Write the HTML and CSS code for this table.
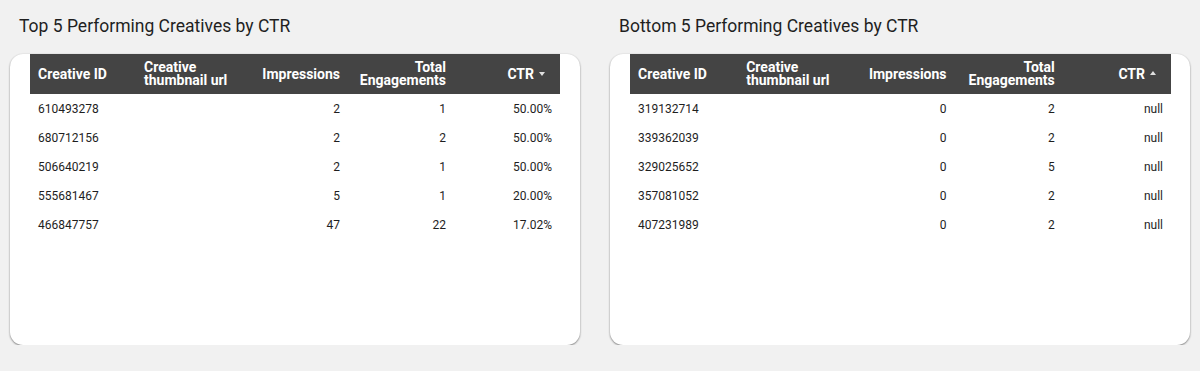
FILE: index.html
```html
<!DOCTYPE html>
<html>
<head>
<meta charset="utf-8">
<link rel="stylesheet" href="styles.css">
</head>
<body>
<div class="dashboard">
  <section class="panel panel-left">
    <h2 class="title">Top 5 Performing Creatives by CTR</h2>
    <div class="card">
      <table class="grid">
        <thead>
          <tr>
            <th class="l">Creative ID</th>
            <th class="l">Creative thumbnail url</th>
            <th class="r">Impressions</th>
            <th class="r">Total Engagements</th>
            <th class="r">CTR<span class="sort down"></span></th>
          </tr>
        </thead>
        <tbody>
          <tr><td>610493278</td><td></td><td class="r">2</td><td class="r">1</td><td class="r">50.00%</td></tr>
          <tr><td>680712156</td><td></td><td class="r">2</td><td class="r">2</td><td class="r">50.00%</td></tr>
          <tr><td>506640219</td><td></td><td class="r">2</td><td class="r">1</td><td class="r">50.00%</td></tr>
          <tr><td>555681467</td><td></td><td class="r">5</td><td class="r">1</td><td class="r">20.00%</td></tr>
          <tr><td>466847757</td><td></td><td class="r">47</td><td class="r">22</td><td class="r">17.02%</td></tr>
        </tbody>
      </table>
    </div>
  </section>
  <section class="panel panel-right">
    <h2 class="title">Bottom 5 Performing Creatives by CTR</h2>
    <div class="card">
      <table class="grid">
        <thead>
          <tr>
            <th class="l">Creative ID</th>
            <th class="l">Creative thumbnail url</th>
            <th class="r">Impressions</th>
            <th class="r">Total Engagements</th>
            <th class="r">CTR<span class="sort up"></span></th>
          </tr>
        </thead>
        <tbody>
          <tr><td>319132714</td><td></td><td class="r">0</td><td class="r">2</td><td class="r">null</td></tr>
          <tr><td>339362039</td><td></td><td class="r">0</td><td class="r">2</td><td class="r">null</td></tr>
          <tr><td>329025652</td><td></td><td class="r">0</td><td class="r">5</td><td class="r">null</td></tr>
          <tr><td>357081052</td><td></td><td class="r">0</td><td class="r">2</td><td class="r">null</td></tr>
          <tr><td>407231989</td><td></td><td class="r">0</td><td class="r">2</td><td class="r">null</td></tr>
        </tbody>
      </table>
    </div>
  </section>
</div>
</body>
</html>
```

FILE: styles.css
```css
html, body {
  margin: 0;
  padding: 0;
  background: #f1f1f1;
  font-family: Roboto, "Liberation Sans", Arial, sans-serif;
  color: #202020;
}

.dashboard {
  display: grid;
  grid-template-columns: 570px 580px;
  column-gap: 30px;
  padding: 0 10px;
}

.panel {
  display: flex;
  flex-direction: column;
}

.title {
  margin: 0;
  height: 54px;
  box-sizing: border-box;
  padding: 14px 9px 0;
  font-size: 17.5px;
  line-height: 24px;
  font-weight: 400;
  color: #1f1f1f;
}

.card {
  height: 291px;
  background: #fff;
  border-radius: 13px;
  box-shadow: 0 1px 2px rgba(0, 0, 0, 0.45), 0 0 2px rgba(0, 0, 0, 0.08);
  padding: 0 20px;
  box-sizing: border-box;
}

.panel-right .card {
  padding: 0 19px 0 20px;
}

.grid {
  width: 100%;
  table-layout: fixed;
  border-collapse: collapse;
  font-size: 12px;
}

.grid th {
  background: #444444;
  color: #fff;
  font-weight: 700;
  font-size: 14px;
  line-height: 13px;
  height: 40px;
  padding: 0 8px;
  vertical-align: middle;
  box-sizing: border-box;
}

.grid td {
  height: 29px;
  box-sizing: border-box;
  padding: 1px 8px 0;
  line-height: 14px;
  vertical-align: middle;
  color: #1e1e1e;
}

.l { text-align: left; }
.r { text-align: right; }

.sort {
  display: inline-block;
  width: 0;
  height: 0;
  margin-left: 5px;
  margin-right: 7px;
  vertical-align: middle;
  border-left: 3.5px solid transparent;
  border-right: 3.5px solid transparent;
}

.sort.down {
  border-top: 4px solid #e0e0e0;
  margin-bottom: 2px;
}

.sort.up {
  border-bottom: 4px solid #e0e0e0;
  margin-bottom: 3px;
}
```
